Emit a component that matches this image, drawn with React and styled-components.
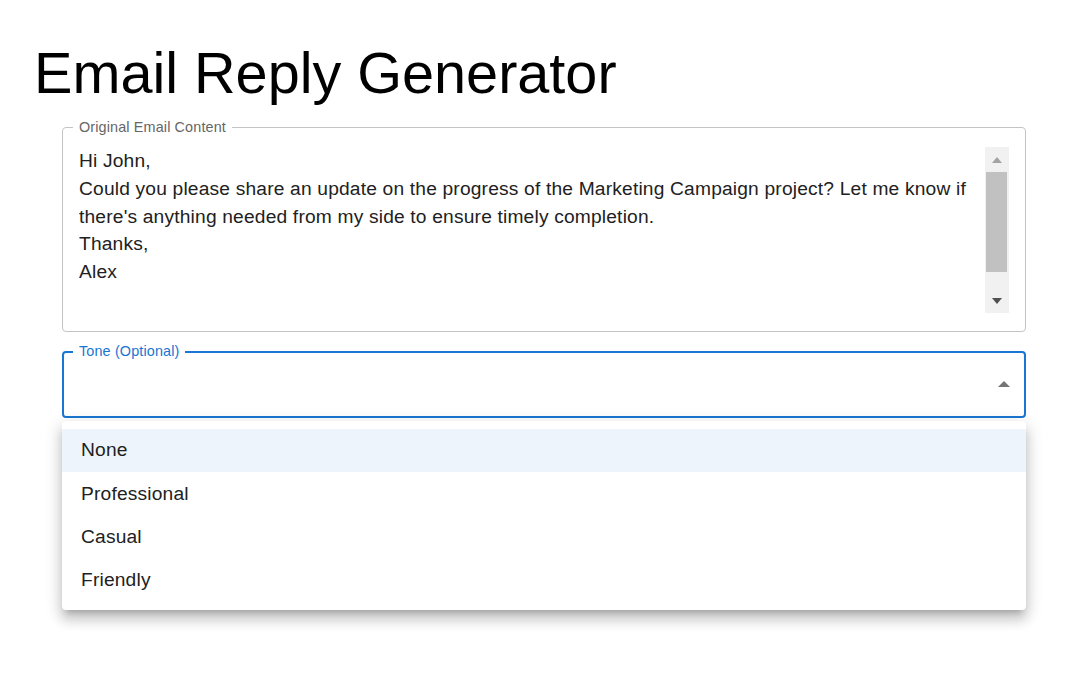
import React from "react";
import styled, { createGlobalStyle } from "styled-components";

const GlobalStyle = createGlobalStyle`
  html, body {
    margin: 0;
    padding: 0;
    background: #fff;
  }
  body {
    font-family: "Liberation Sans", Arial, sans-serif;
  }
`;

const Page = styled.div`
  padding: 40px 60px 60px 34px;
  font-family: "Liberation Sans", Arial, sans-serif;
`;

const Title = styled.h3`
  margin: 0;
  font-size: 57.6px;
  line-height: 67.2px;
  font-weight: 400;
  color: #000;
`;

const Form = styled.div`
  margin-left: 28px;
  padding-top: 13px;
  display: flex;
  flex-direction: column;
`;

const Outlined = styled.fieldset`
  margin: 0;
  padding: 0;
  min-width: 0;
  border: ${(p) => (p.$focused ? "2px solid #1976d2" : "1px solid #c4c4c4")};
  border-radius: 4px;
`;

const Legend = styled.legend`
  margin-left: ${(p) => (p.$focused ? "9px" : "10px")};
  padding: 0 6px;
  font-size: 14.4px;
  line-height: 14.4px;
  letter-spacing: 0.135px;
  color: ${(p) => (p.$focused ? "#1976d2" : "#666")};
`;

const TextBody = styled.div`
  display: flex;
  height: 166px;
  padding: 12.8px 16px 18px 16px;
`;

const EmailText = styled.div`
  flex: 1;
  font-size: 19.2px;
  line-height: 27.6px;
  letter-spacing: 0.18px;
  color: #212121;
  white-space: pre-wrap;
  overflow: hidden;
`;

const ScrollTrack = styled.div`
  width: 24px;
  flex: none;
  background: #f1f1f1;
  display: flex;
  flex-direction: column;
  align-items: center;
`;

const ScrollButton = styled.div`
  height: 25px;
  width: 100%;
  display: flex;
  align-items: center;
  justify-content: center;
`;

const Thumb = styled.div`
  height: 100px;
  width: 21px;
  margin-left: -1px;
  background: #c1c1c1;
`;

const TrackGap = styled.div`
  flex: 1;
`;

const Arrow = styled.span`
  width: 0;
  height: 0;
  border-left: ${(p) => p.$half}px solid transparent;
  border-right: ${(p) => p.$half}px solid transparent;
  ${(p) =>
    p.$up
      ? `border-bottom: ${p.$tall}px solid ${p.$color};`
      : `border-top: ${p.$tall}px solid ${p.$color};`}
`;

const SelectWrap = styled.div`
  margin-top: 12px;
  display: flex;
  flex-direction: column;
`;

const SelectBody = styled.div`
  height: 50px;
  padding: 0 14px 7px 16px;
  display: flex;
  align-items: center;
  justify-content: flex-end;
`;

const Menu = styled.ul`
  margin: 3px 0 0;
  padding: 8px 0;
  list-style: none;
  background: #fff;
  border-radius: 4px;
  box-shadow: 0px 6px 6px -4px rgba(0, 0, 0, 0.2),
    0px 10px 12px 1px rgba(0, 0, 0, 0.14), 0px 4px 17px 2px rgba(0, 0, 0, 0.12);
`;

const MenuItem = styled.li`
  height: 43.2px;
  display: flex;
  align-items: center;
  padding: 0 19px;
  font-size: 19.2px;
  letter-spacing: 0.18px;
  color: #212121;
  background: ${(p) => (p.$selected ? "rgba(25, 118, 210, 0.08)" : "transparent")};
`;

const email = `Hi John,
Could you please share an update on the progress of the Marketing Campaign project? Let me know if there's anything needed from my side to ensure timely completion.
Thanks,
Alex`;

const tones = ["None", "Professional", "Casual", "Friendly"];

const App = () => {
  return (
    <Page>
      <GlobalStyle />
      <Title>Email Reply Generator</Title>
      <Form>
        <Outlined>
          <Legend>Original Email Content</Legend>
          <TextBody>
            <EmailText>{email}</EmailText>
            <ScrollTrack>
              <ScrollButton>
                <Arrow $up $half={5.5} $tall={6} $color="#a3a3a3" />
              </ScrollButton>
              <Thumb />
              <TrackGap />
              <ScrollButton>
                <Arrow $half={5.5} $tall={6} $color="#505050" />
              </ScrollButton>
            </ScrollTrack>
          </TextBody>
        </Outlined>
        <SelectWrap>
          <Outlined $focused>
            <Legend $focused>Tone (Optional)</Legend>
            <SelectBody>
              <Arrow $up $half={6} $tall={6} $color="#757575" />
            </SelectBody>
          </Outlined>
          <Menu>
            {tones.map((t, i) => (
              <MenuItem key={t} $selected={i === 0}>
                {t}
              </MenuItem>
            ))}
          </Menu>
        </SelectWrap>
      </Form>
    </Page>
  );
};

export default App;
